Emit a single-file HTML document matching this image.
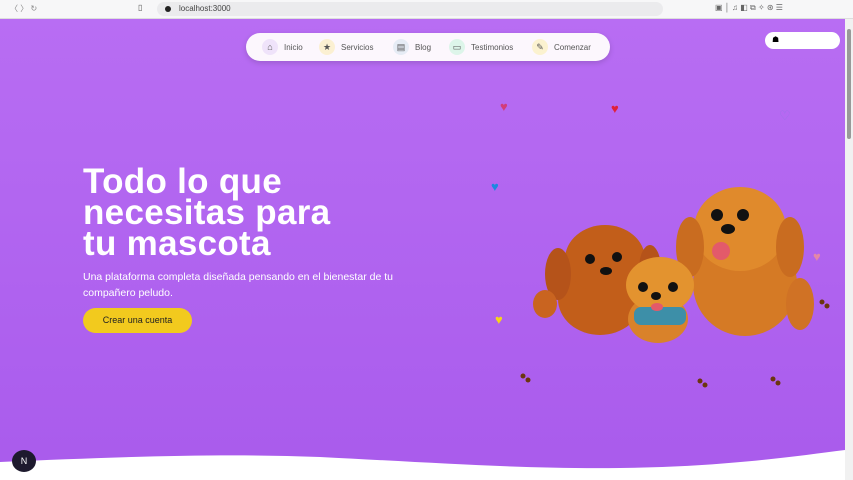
<!DOCTYPE html>
<html><head><meta charset="utf-8"><style>
*{margin:0;padding:0;box-sizing:border-box}
body{width:853px;height:480px;overflow:hidden;font-family:"Liberation Sans",sans-serif;background:#fff;position:relative}
.chrome{position:absolute;left:0;top:0;width:853px;height:19px;background:#f7f7f8;border-bottom:1px solid #ddd;font-size:8px;color:#555}
.url{position:absolute;left:157px;top:2px;width:506px;height:14px;background:#ebebed;border-radius:7px}
.url span{position:absolute;left:22px;top:2px;color:#444}
.url i{position:absolute;left:8px;top:4px;width:6px;height:6px;border-radius:50%;background:#222}
.hero{position:absolute;left:0;top:19px;width:845px;height:461px;background:linear-gradient(#b86df3,#a95bec)}
.scroll{position:absolute;left:845px;top:19px;width:8px;height:461px;background:#f1f1f1}
.scroll i{position:absolute;left:2px;top:10px;width:4px;height:110px;background:#999;border-radius:2px}
.nav{position:absolute;left:246px;top:33px;width:364px;height:28px;background:#fcf7fd;border-radius:14px;box-shadow:0 2px 6px rgba(0,0,0,.15);font-size:8px;color:#555}
.nav div{position:absolute;top:6px;display:flex;align-items:center;gap:6px}
.nav b{display:inline-block;width:16px;height:16px;border-radius:50%;font-weight:normal;font-size:9px;text-align:center;line-height:16px}
.login{position:absolute;left:765px;top:32px;width:75px;height:17px;background:#fff;border-radius:9px}
h1{position:absolute;left:83px;top:166px;font-size:35px;line-height:31px;color:#fff;font-weight:bold;letter-spacing:0.3px}
p{position:absolute;left:83px;top:269px;font-size:10.5px;line-height:16px;color:#fff;width:330px}
.btn{position:absolute;left:83px;top:308px;width:109px;height:25px;border-radius:13px;background:#f2ca1e;font-size:9px;text-align:center;line-height:25px;color:#222}
.n{position:absolute;left:12px;top:450px;width:24px;height:22px;border-radius:50%;background:#1e1a2e;color:#fff;font-size:9px;text-align:center;line-height:22px}
.h{position:absolute;font-size:13px}
</style></head><body>
<div class="chrome"><span style="position:absolute;left:10px;top:3px;color:#888">〈 〉 ↻</span><span style="position:absolute;left:138px;top:3px">▯</span>
<div class="url"><i></i><span>localhost:3000</span></div>
<span style="position:absolute;left:715px;top:3px;color:#666">▣ │ ♫ ◧ ⧉ ✧ ⊛ ☰</span></div>
<div class="hero">
<svg width="845" height="461" style="position:absolute;left:0;top:0">
<path d="M0 443 C120 438 220 434 320 438 C440 444 520 450 620 449 C720 448 790 438 845 431 L845 461 L0 461Z" fill="#fff"/>
<g fill="#c25e1a">
<ellipse cx="600" cy="280" rx="42" ry="36"/><ellipse cx="605" cy="240" rx="40" ry="34"/>
<ellipse cx="558" cy="255" rx="13" ry="26" fill="#b5531a"/><ellipse cx="650" cy="250" rx="11" ry="24" fill="#b5531a"/>
<ellipse cx="545" cy="285" rx="12" ry="14" fill="#c96420"/>
<ellipse cx="745" cy="265" rx="52" ry="52" fill="#d57a25"/><ellipse cx="740" cy="210" rx="46" ry="42" fill="#e08a2c"/>
<ellipse cx="690" cy="228" rx="14" ry="30" fill="#c96c20"/><ellipse cx="790" cy="228" rx="14" ry="30" fill="#c96c20"/>
<ellipse cx="800" cy="285" rx="14" ry="26" fill="#d07225"/>
<ellipse cx="658" cy="300" rx="30" ry="24" fill="#d9822a"/><ellipse cx="660" cy="266" rx="34" ry="28" fill="#e3932f"/>
<rect x="634" y="288" width="52" height="18" rx="7" fill="#3d8fa8"/>
</g>
<g fill="#111"><circle cx="590" cy="240" r="5"/><circle cx="617" cy="238" r="5"/><ellipse cx="606" cy="252" rx="6" ry="4"/>
<circle cx="717" cy="196" r="6"/><circle cx="743" cy="196" r="6"/><ellipse cx="728" cy="210" rx="7" ry="5"/>
<circle cx="643" cy="268" r="5"/><circle cx="673" cy="268" r="5"/><ellipse cx="656" cy="277" rx="5" ry="4"/></g>
<ellipse cx="721" cy="232" rx="9" ry="9" fill="#e35a6a"/><ellipse cx="657" cy="288" rx="6" ry="4" fill="#e35a6a"/>
<g fill="#6b3510"><circle cx="822" cy="283" r="2.5"/><circle cx="827" cy="287" r="2.5"/><circle cx="523" cy="357" r="2.5"/><circle cx="528" cy="361" r="2.5"/><circle cx="700" cy="362" r="2.5"/><circle cx="705" cy="366" r="2.5"/><circle cx="773" cy="360" r="2.5"/><circle cx="778" cy="364" r="2.5"/></g>
</svg>
<span class="h" style="left:500px;top:80px;color:#d23d7a">♥</span>
<span class="h" style="left:611px;top:82px;color:#e0203a">♥</span>
<span class="h" style="left:779px;top:89px;color:#9a72e8">♡</span>
<span class="h" style="left:491px;top:160px;color:#1e88e0">♥</span>
<span class="h" style="left:813px;top:230px;color:#e487a8">♥</span>
<span class="h" style="left:495px;top:293px;color:#f6d51a">♥</span>
</div>
<div class="scroll"><i></i></div>
<div class="nav">
<div style="left:16px"><b style="background:#efe3fa">⌂</b>Inicio</div>
<div style="left:73px"><b style="background:#fbf0d2">★</b>Servicios</div>
<div style="left:147px"><b style="background:#e6ecf5">▤</b>Blog</div>
<div style="left:203px"><b style="background:#ddf5ea">▭</b>Testimonios</div>
<div style="left:286px"><b style="background:#fbf2d0">✎</b>Comenzar</div>
</div>
<div class="login"><span style="position:absolute;left:7px;top:3px;font-size:8px">☗</span></div>
<h1>Todo lo que<br>necesitas para<br>tu mascota</h1>
<p>Una plataforma completa diseñada pensando en el bienestar de tu compañero peludo.</p>
<div class="btn">Crear una cuenta</div>
<div class="n">N</div>
</body></html>
